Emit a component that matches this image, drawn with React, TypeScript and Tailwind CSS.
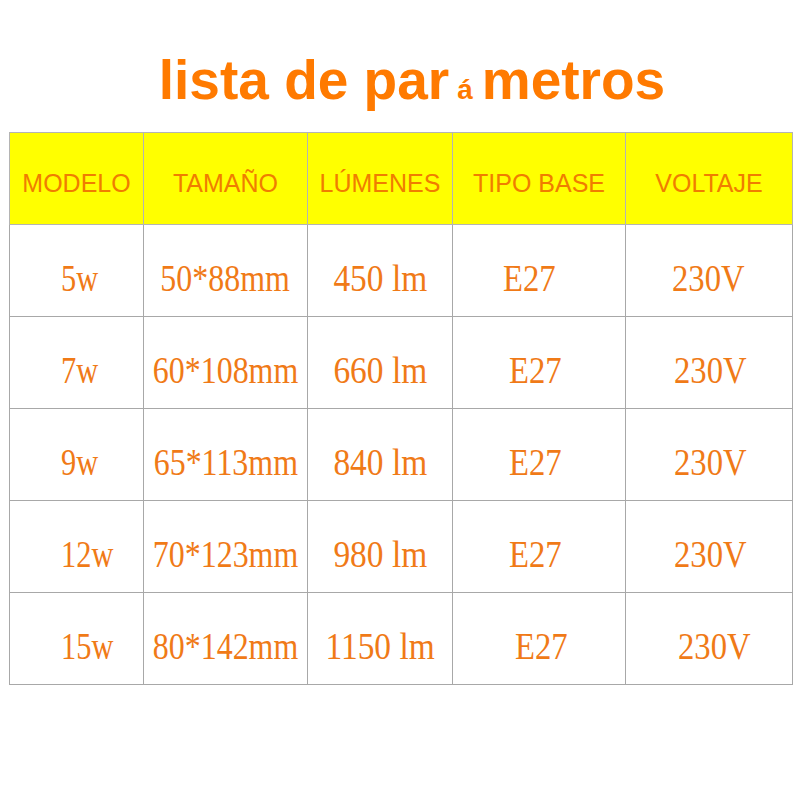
const headers = ["MODELO", "TAMAÑO", "LÚMENES", "TIPO BASE", "VOLTAJE"];

// base/voltage cells sit a little off-centre in the source, so each row keeps its own left padding
const rows = [
  { cells: ["5w", "50*88mm", "450 lm", "E27", "230V"], basePad: "pl-[50px]", voltPad: "pl-[46px]" },
  { cells: ["7w", "60*108mm", "660 lm", "E27", "230V"], basePad: "pl-[56px]", voltPad: "pl-[48px]" },
  { cells: ["9w", "65*113mm", "840 lm", "E27", "230V"], basePad: "pl-[56px]", voltPad: "pl-[48px]" },
  { cells: ["12w", "70*123mm", "980 lm", "E27", "230V"], basePad: "pl-[56px]", voltPad: "pl-[48px]" },
  { cells: ["15w", "80*142mm", "1150 lm", "E27", "230V"], basePad: "pl-[62px]", voltPad: "pl-[52px]" },
];

const colWidths = ["w-[134px]", "w-[164px]", "w-[145px]", "w-[173px]", "w-[167px]"];

const cellText =
  "inline-block text-[38px] leading-none text-[#f07a17] font-['Liberation_Serif','Times_New_Roman',serif]";

export default function App() {
  return (
    <div className="w-[800px] h-[800px] bg-white">
      {/* Title */}
      <div className="pt-[53px] h-[108px] pl-[24px] flex justify-center items-baseline text-[#ff7a00] font-bold font-['Liberation_Sans',Arial,sans-serif] leading-none">
        <span className="text-[55px]">lista de par</span>
        <span className="text-[28px] ml-[8px] mr-[9px]">á</span>
        <span className="text-[55px]">metros</span>
      </div>

      {/* Table */}
      <div className="mt-[24px] ml-[9px]">
        <table className="w-[783px] border-collapse table-fixed">
          <thead>
            <tr className="h-[92px] bg-[#ffff00]">
              {headers.map((h, i) => (
                <th
                  key={h}
                  className={`${colWidths[i]} border border-[#b4b4b4] p-0 pt-[9px] text-center align-middle font-normal text-[25px] leading-none text-[#f07d00] font-['Liberation_Sans',Arial,sans-serif]`}
                >
                  {h}
                </th>
              ))}
            </tr>
          </thead>
          <tbody>
            {rows.map((r) => (
              <tr key={r.cells[0]} className="h-[92px]">
                <td className="border border-[#a8a8a8] p-0 pt-[15px] pl-[51px] text-left align-middle">
                  <span className={`${cellText} origin-left scale-x-[0.8]`}>{r.cells[0]}</span>
                </td>
                <td className="border border-[#a8a8a8] p-0 pt-[15px] text-center align-middle whitespace-nowrap">
                  <span className={`${cellText} -mx-[20px] scale-x-[0.84]`}>{r.cells[1]}</span>
                </td>
                <td className="border border-[#a8a8a8] p-0 pt-[15px] text-center align-middle whitespace-nowrap">
                  <span className={`${cellText} -mx-[10px] scale-x-[0.88]`}>{r.cells[2]}</span>
                </td>
                <td className={`border border-[#a8a8a8] p-0 pt-[15px] ${r.basePad} text-left align-middle`}>
                  <span className={`${cellText} origin-left scale-x-[0.86]`}>{r.cells[3]}</span>
                </td>
                <td className={`border border-[#a8a8a8] p-0 pt-[15px] ${r.voltPad} text-left align-middle`}>
                  <span className={`${cellText} origin-left scale-x-[0.86]`}>{r.cells[4]}</span>
                </td>
              </tr>
            ))}
          </tbody>
        </table>
      </div>
    </div>
  );
}
